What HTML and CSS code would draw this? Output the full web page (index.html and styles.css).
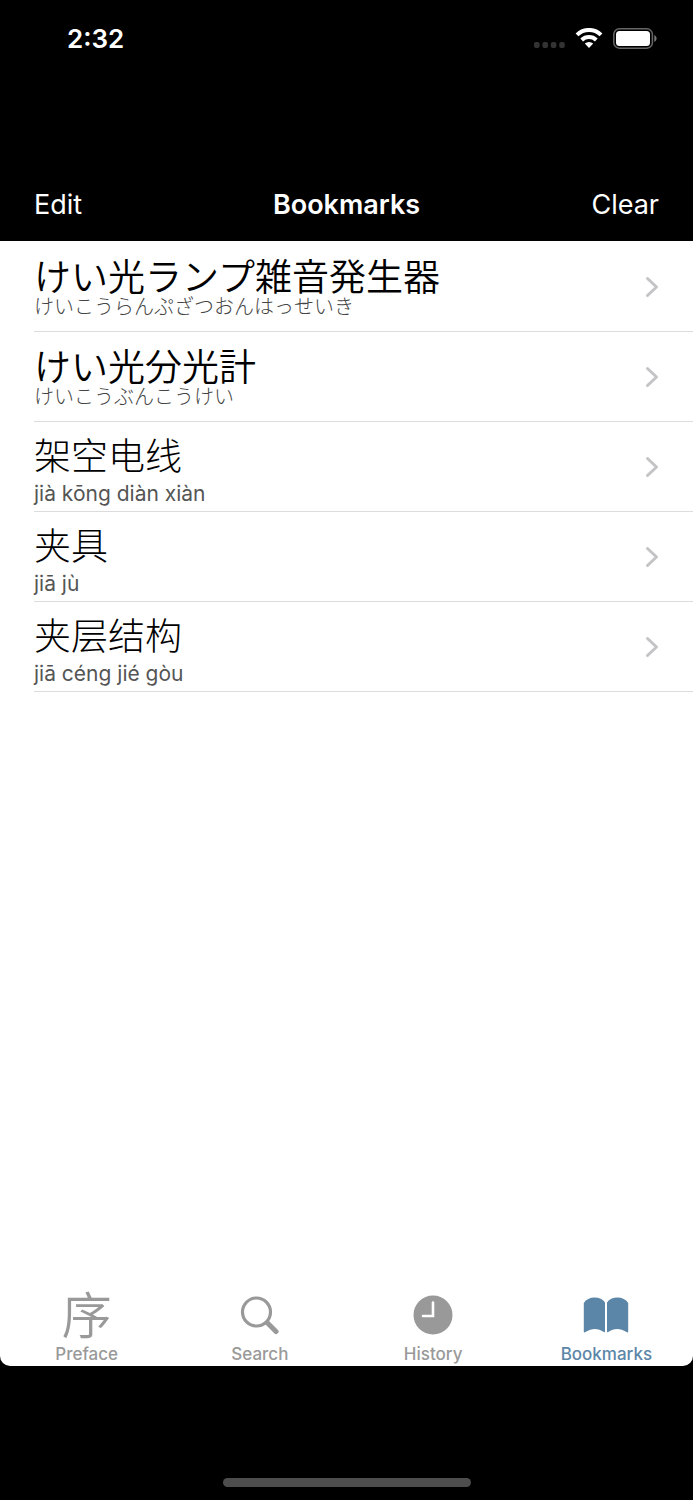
FILE: index.html
```html
<!DOCTYPE html>
<html lang="en">
<head>
    <meta charset="UTF-8">
    <meta name="viewport" content="width=device-width, initial-scale=1.0">
    <title>Bookmarks</title>
    <link rel="stylesheet" href="styles.css">
</head>
<body>
    <div class="status-bar">
        <span class="time">2:32</span>
        <div class="status-icons">
            <svg width="31" height="6" viewBox="0 0 31 6" fill="#333">
                <rect x="0" y="0" width="5.600" height="6" rx="2"/>
                <rect x="8.400" y="0" width="5.600" height="6" rx="2"/>
                <rect x="16.800" y="0" width="5.600" height="6" rx="2"/>
                <rect x="25.200" y="0" width="5.600" height="6" rx="2"/>
            </svg>
            <svg class="wifi" width="28" height="20" viewBox="0 0 28 20" fill="none" stroke="#fff" stroke-width="4">
                <path d="M2 6.900a17 17 0 0 1 24 0"/>
                <path d="M6.700 12a10.600 10.600 0 0 1 14.600 0"/>
                <path d="M14 20l-4.200-4.400a6.200 6.200 0 0 1 8.400 0z" fill="#fff" stroke="none"/>
            </svg>
            <svg class="battery" width="44" height="21" viewBox="0 0 44 21">
                <rect x="0.8" y="0.8" width="38.600" height="19.400" rx="5.500" fill="none" stroke="#666" stroke-width="1.500"/>
                <rect x="3" y="3" width="34" height="15" rx="3.500" fill="#fff"/>
                <path d="M41.300 7c3 1.400 3 5.600 0 7z" fill="#777"/>
            </svg>
        </div>
    </div>

    <header class="nav-bar">
        <button class="nav-btn" type="button">Edit</button>
        <h1>Bookmarks</h1>
        <button class="nav-btn nav-btn-right" type="button">Clear</button>
    </header>

    <main class="screen">
        <ul class="bookmark-list">
            <li>
                <a class="bookmark" href="#" lang="ja">
                    <div class="entry">
                        <span class="word">けい光ランプ雑音発生器</span>
                        <span class="kana">けいこうらんぷざつおんはっせいき</span>
                    </div>
                    <svg class="chevron" width="14" height="22" viewBox="0 0 14 22"><path d="M2.500 2.500l9 8.500-9 8.500"/></svg>
                </a>
            </li>
            <li>
                <a class="bookmark" href="#" lang="ja">
                    <div class="entry">
                        <span class="word">けい光分光計</span>
                        <span class="kana">けいこうぶんこうけい</span>
                    </div>
                    <svg class="chevron" width="14" height="22" viewBox="0 0 14 22"><path d="M2.500 2.500l9 8.500-9 8.500"/></svg>
                </a>
            </li>
            <li>
                <a class="bookmark" href="#" lang="zh-Hans">
                    <div class="entry">
                        <span class="word">架空电线</span>
                        <span class="pinyin">jià kōng diàn xiàn</span>
                    </div>
                    <svg class="chevron" width="14" height="22" viewBox="0 0 14 22"><path d="M2.500 2.500l9 8.500-9 8.500"/></svg>
                </a>
            </li>
            <li>
                <a class="bookmark" href="#" lang="zh-Hans">
                    <div class="entry">
                        <span class="word">夹具</span>
                        <span class="pinyin">jiā jù</span>
                    </div>
                    <svg class="chevron" width="14" height="22" viewBox="0 0 14 22"><path d="M2.500 2.500l9 8.500-9 8.500"/></svg>
                </a>
            </li>
            <li>
                <a class="bookmark" href="#" lang="zh-Hans">
                    <div class="entry">
                        <span class="word">夹层结构</span>
                        <span class="pinyin">jiā céng jié gòu</span>
                    </div>
                    <svg class="chevron" width="14" height="22" viewBox="0 0 14 22"><path d="M2.500 2.500l9 8.500-9 8.500"/></svg>
                </a>
            </li>
        </ul>

        <nav class="tab-bar">
            <a class="tab" href="#">
                <span class="tab-icon tab-glyph" lang="zh-Hans">序</span>
                <span>Preface</span>
            </a>
            <a class="tab" href="#">
                <span class="tab-icon">
                    <svg width="40" height="40" viewBox="0 0 40 40" fill="none" stroke="#999">
                        <circle cx="16.500" cy="17" r="14" stroke-width="3.200"/>
                        <path d="M26 26.500l2 2" stroke-width="3"/>
                        <path d="M27.500 28l8.500 8.500" stroke-width="5" stroke-linecap="round"/>
                    </svg>
                </span>
                <span>Search</span>
            </a>
            <a class="tab" href="#">
                <span class="tab-icon">
                    <svg width="40" height="40" viewBox="0 0 40 40">
                        <circle cx="20" cy="20" r="19.500" fill="#999"/>
                        <path d="M20 7.500v13.500H10" fill="none" stroke="#fff" stroke-width="2.600" stroke-linecap="round"/>
                    </svg>
                </span>
                <span>History</span>
            </a>
            <a class="tab tab-active" href="#">
                <span class="tab-icon">
                    <svg width="46" height="36" viewBox="0 0 46 36" fill="#5c86a8">
                        <path d="M.8 6C3 2.500 7 .6 11.500 .6S20 2.500 22 5.500V34.500Q22 35.800 20.800 35C15 31 9 31 2.500 35Q.8 36 .8 34.500z"/>
                        <path d="M45.200 6C43 2.500 39 .6 34.500 .6S26 2.500 24 5.500V34.500Q24 35.800 25.200 35C31 31 37 31 43.500 35Q45.200 36 45.200 34.500z"/>
                    </svg>
                </span>
                <span>Bookmarks</span>
            </a>
        </nav>
    </main>

    <footer class="home-area">
        <div class="home-indicator"></div>
    </footer>
</body>
</html>
```

FILE: styles.css
```css
* {
    box-sizing: border-box;
}

body {
    display: flex;
    flex-direction: column;
    min-height: 100vh;
    margin: 0;
    background-color: #000;
    font-family: Inter, 'Noto Sans CJK JP', sans-serif;
}

a {
    color: inherit;
    text-decoration: none;
}

.status-bar {
    display: flex;
    justify-content: space-between;
    align-items: center;
    height: 76px;
    padding: 0 36px 0 67px;
    color: #fff;
}

.time {
    font-size: 26px;
    font-weight: 600;
}

.status-icons {
    display: flex;
    align-items: center;
    gap: 10px;
}

.status-icons svg:first-child {
    margin-top: 14px;
}

.nav-bar {
    display: grid;
    grid-template-columns: 1fr auto 1fr;
    align-items: center;
    height: 165px;
    padding: 92px 34px 0;
    color: #fff;
}

.nav-bar h1 {
    margin: 0;
    font-size: 27px;
    font-weight: 600;
}

.nav-btn {
    justify-self: start;
    padding: 0;
    border: none;
    background: none;
    color: #fff;
    font-family: inherit;
    font-size: 27px;
    cursor: pointer;
}

.nav-btn-right {
    justify-self: end;
}

.screen {
    display: flex;
    flex: 1;
    flex-direction: column;
    justify-content: space-between;
    border-radius: 0 0 10px 10px;
    background-color: #fff;
}

.bookmark-list {
    margin: 0;
    padding: 1px 0 0 34px;
    list-style: none;
}

.bookmark {
    display: flex;
    justify-content: space-between;
    align-items: center;
    height: 90px;
    padding-right: 34px;
    border-bottom: 1px solid #dcdcdc;
}

.bookmark:lang(zh) {
    font-family: Inter, 'Noto Sans CJK SC', sans-serif;
}

.entry {
    display: flex;
    flex-direction: column;
    align-self: flex-start;
    padding-top: 12px;
}

.word {
    color: #000;
    font-size: 37px;
    font-weight: 300;
    line-height: 46px;
}

.word:lang(ja) {
    font-family: 'Noto Sans CJK JP', sans-serif;
    font-weight: 350;
    line-height: 42px;
}

.kana {
    color: #444;
    font-family: 'Noto Sans CJK JP', sans-serif;
    font-size: 20px;
    font-weight: 300;
    line-height: 20px;
}

.pinyin {
    color: #555;
    font-size: 21px;
    line-height: 28px;
}

.chevron {
    fill: none;
    stroke: #c4c4c6;
    stroke-width: 3;
    stroke-linecap: round;
    stroke-linejoin: round;
}

.tab-bar {
    display: grid;
    grid-template-columns: repeat(4, 1fr);
}

.tab {
    display: flex;
    flex-direction: column;
    align-items: center;
    color: #999;
    font-size: 17px;
    font-weight: 500;
    line-height: 24px;
}

.tab-active {
    color: #5c86a8;
}

.tab-icon {
    display: flex;
    align-items: center;
    height: 52px;
    padding-bottom: 2px;
}

.tab-glyph {
    align-items: flex-start;
    font-family: 'Noto Sans CJK SC', sans-serif;
    font-size: 50px;
    font-weight: 350;
    line-height: 44px;
}

.home-area {
    display: flex;
    justify-content: center;
    align-items: flex-end;
    height: 134px;
    padding-bottom: 13px;
}

.home-indicator {
    width: 248px;
    height: 9px;
    border-radius: 5px;
    background-color: #4d4d4d;
}
```
